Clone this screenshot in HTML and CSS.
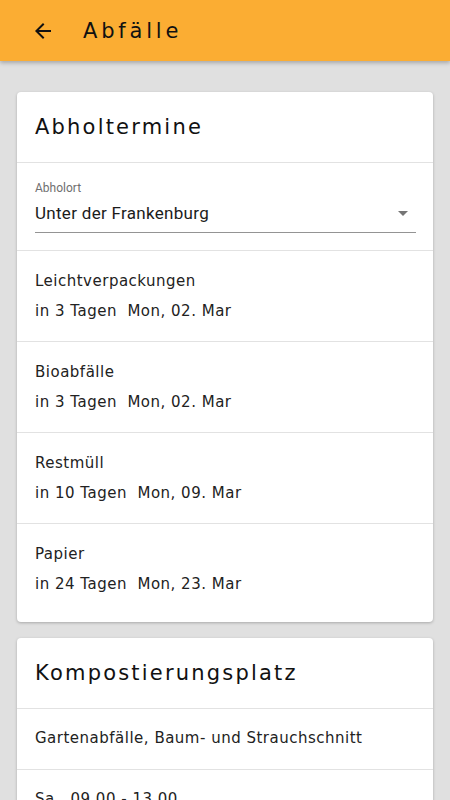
FILE: index.html
```html
<!DOCTYPE html>
<html lang="de">
<head>
    <meta charset="UTF-8">
    <meta name="viewport" content="width=device-width, initial-scale=1.0">
    <title>Abfälle</title>
    <link rel="stylesheet" href="styles.css">
</head>
<body>
    <header class="app-bar">
        <button class="back-button" aria-label="Zurück">
            <svg width="24" height="24" viewBox="0 0 24 24"><path d="M20 11H7.83l5.59-5.59L12 4l-8 8 8 8 1.41-1.41L7.83 13H20v-2z" fill="#111"/></svg>
        </button>
        <h1 class="app-title">Abfälle</h1>
    </header>

    <main class="content">
        <section class="card">
            <h2 class="card-title">Abholtermine</h2>

            <div class="select-field">
                <label class="select-label">Abholort</label>
                <div class="select-value">
                    <span>Unter der Frankenburg</span>
                    <span class="select-arrow"></span>
                </div>
            </div>

            <div class="card-row">
                <div class="row-line">Leichtverpackungen</div>
                <div class="row-line">in 3 Tagen&nbsp;&nbsp;Mon, 02. Mar</div>
            </div>
            <div class="card-row">
                <div class="row-line">Bioabfälle</div>
                <div class="row-line">in 3 Tagen&nbsp;&nbsp;Mon, 02. Mar</div>
            </div>
            <div class="card-row">
                <div class="row-line">Restmüll</div>
                <div class="row-line">in 10 Tagen&nbsp;&nbsp;Mon, 09. Mar</div>
            </div>
            <div class="card-row">
                <div class="row-line">Papier</div>
                <div class="row-line">in 24 Tagen&nbsp;&nbsp;Mon, 23. Mar</div>
            </div>
        </section>

        <section class="card">
            <h2 class="card-title">Kompostierungsplatz</h2>
            <div class="card-row single">
                <div class="row-line">Gartenabfälle, Baum- und Strauchschnitt</div>
            </div>
            <div class="card-row single">
                <div class="row-line">Sa.&nbsp;&nbsp;09.00 - 13.00</div>
            </div>
        </section>
    </main>
</body>
</html>
```

FILE: styles.css
```css
/* Grundlayout */
html, body {
    margin: 0;
    padding: 0;
}

body {
    background-color: #e0e0e0;
    font-family: "DejaVu Sans", "Noto Sans", sans-serif;
    color: rgba(0, 0, 0, 0.87);
    height: 800px;
    overflow: hidden;
}

/* Kopfleiste */
.app-bar {
    height: 61px;
    background-color: #fbad33;
    display: flex;
    align-items: center;
    padding-left: 31px;
    box-shadow: 0 2px 4px rgba(0, 0, 0, 0.25);
    position: relative;
    z-index: 1;
}

.back-button {
    background: none;
    border: none;
    padding: 0;
    width: 24px;
    height: 24px;
    cursor: pointer;
}

.app-title {
    margin: 0 0 0 28px;
    font-size: 21px;
    font-weight: normal;
    letter-spacing: 3.8px;
    color: #111;
}

/* Inhalt */
.content {
    padding: 31px 17px 0 17px;
    display: flex;
    flex-direction: column;
    gap: 16px;
}

.card {
    background-color: #fff;
    border-radius: 4px;
    box-shadow: 0 1px 3px rgba(0, 0, 0, 0.25);
    padding-bottom: 8px;
}

.card-title {
    margin: 0;
    height: 70px;
    display: flex;
    align-items: center;
    padding: 0 18px;
    font-size: 21px;
    font-weight: normal;
    letter-spacing: 2.2px;
    color: #111;
}

/* Auswahlfeld */
.select-field {
    border-top: 1px solid #e2e2e2;
    padding: 17px 17px 17px 18px;
    font-family: Roboto, "Liberation Sans", sans-serif;
}

.select-label {
    display: block;
    font-size: 12px;
    line-height: 16px;
    color: #6f6f6f;
}

.select-value {
    display: flex;
    align-items: center;
    justify-content: space-between;
    font-size: 17px;
    letter-spacing: 0.3px;
    line-height: 22px;
    padding: 6px 0 8px 0;
    border-bottom: 1px solid #949494;
    color: #1b1b1b;
}

.select-arrow {
    width: 0;
    height: 0;
    border-left: 5px solid transparent;
    border-right: 5px solid transparent;
    border-top: 5px solid #757575;
    margin-right: 8px;
}

/* Zeilen */
.card-row {
    border-top: 1px solid #e2e2e2;
    padding: 15px 18px 15px 18px;
}

.card-row.single {
    padding: 14px 18px 16px 18px;
}

.row-line {
    font-size: 15px;
    letter-spacing: 0.5px;
    line-height: 30px;
    color: #222;
}
```
